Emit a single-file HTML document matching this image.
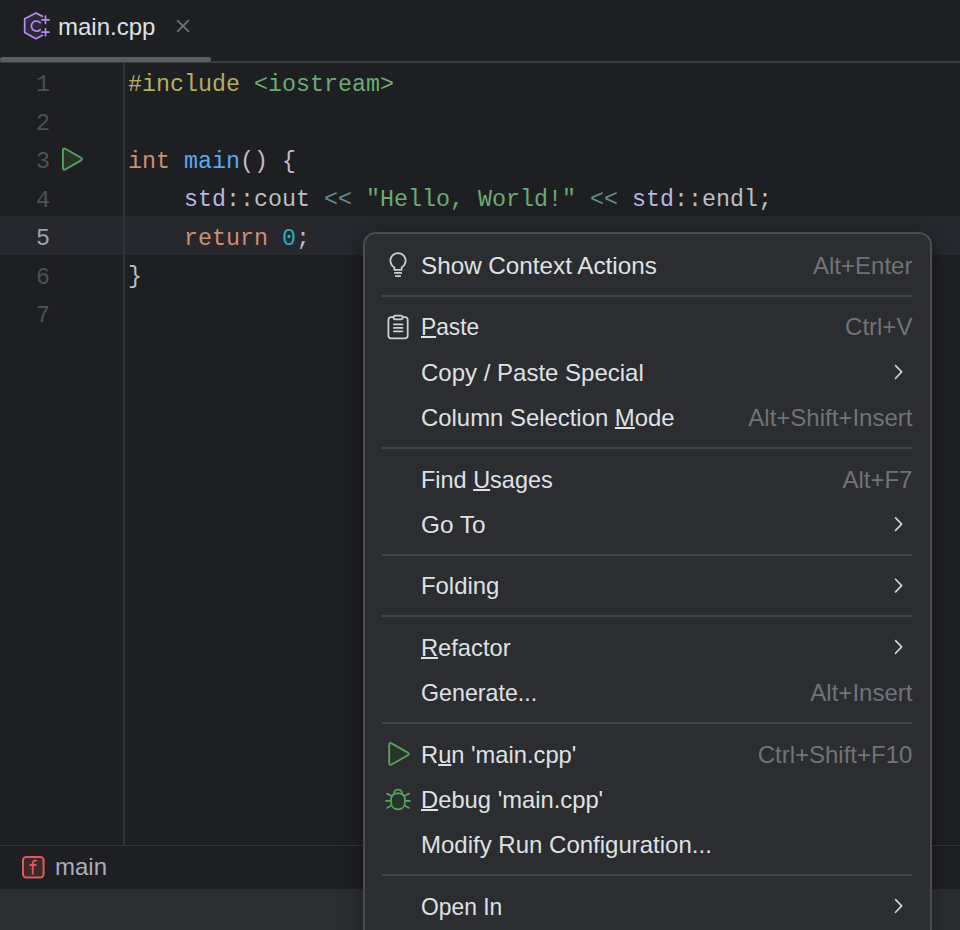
<!DOCTYPE html>
<html><head><meta charset="utf-8">
<style>
*{margin:0;padding:0;box-sizing:border-box}
html,body{width:960px;height:930px;overflow:hidden;background:#1E1F22}
body{position:relative;font-family:"Liberation Sans",sans-serif}
.abs{position:absolute}
#tabbar{left:0;top:0;width:960px;height:61px;background:#1E1F22}
#tabborder{left:0;top:61px;width:960px;height:1.5px;background:#393B40}
#tabul{left:0;top:57px;width:211px;height:5px;border-radius:3px;background:#5A5D63}
#tabtext{left:58px;top:12px;font-size:24px;line-height:30px;color:#DFE1E5;white-space:pre}
#tabclose{left:172px;top:16px}
#editor{left:0;top:62px;width:960px;height:783px;background:#1E1F22}
#curline{left:0;top:216px;width:960px;height:38.5px;background:#26282E}
#gutsep{left:123px;top:62px;width:2px;height:783px;background:#313438}
.ln{position:absolute;left:0;width:50px;padding-top:4px;text-align:right;font-family:"Liberation Mono",monospace;font-size:23.33px;line-height:38.5px;color:#4B5059}
.code{position:absolute;left:128px;padding-top:3.5px;font-family:"Liberation Mono",monospace;font-size:23.33px;line-height:38.5px;color:#BCBEC4;white-space:pre}
.kw{color:#CF8E6D}.fn{color:#56A8F5}.pp{color:#B3AE60}.str{color:#6AAB73}.num{color:#2AACB8}.ns{color:#B5B6E3}.op{color:#5F8C8A}
#crumbborder{left:0;top:844.5px;width:960px;height:1.3px;background:#313438}
#crumbs{left:0;top:845.5px;width:960px;height:43.5px;background:#1E1F22}
#status{left:0;top:889px;width:960px;height:41px;background:#2B2D30}
#crumbtext{left:55px;top:852px;font-size:24px;line-height:30px;color:#A8ADBD}
#menu{left:363px;top:232px;width:569px;height:720px;background:#2B2D30;border:2px solid #4A4C51;border-radius:13px;box-shadow:0 4px 24px rgba(0,0,0,0.35)}
.mi{position:absolute;left:0;width:569px;height:45.4px}
.mi .t{transform-origin:0 0;position:absolute;left:56.0px;top:0.7px;font-size:24px;line-height:45.4px;color:#DFE1E5;white-space:pre}
.mi .k{position:absolute;right:21.6px;top:0.7px;font-size:24px;line-height:45.4px;color:#6F737A;white-space:pre}
.mi .ch{position:absolute;right:28px;top:15px}
.mi .ic{position:absolute;left:22px;top:8px}
.sep{position:absolute;left:17px;width:530px;height:2px;background:#43454A}
u{text-decoration:underline;text-decoration-thickness:2px;text-underline-offset:1px}
</style></head><body>
<div id="tabbar" class="abs"></div>
<div id="editor" class="abs"></div>
<div id="curline" class="abs"></div>
<div id="gutsep" class="abs"></div>
<div id="tabborder" class="abs"></div>
<div id="tabul" class="abs"></div>
<div id="tabtext" class="abs">main.cpp</div>

<div class="ln" style="top:62px">1</div>
<div class="ln" style="top:100.5px">2</div>
<div class="ln" style="top:139px">3</div>
<div class="ln" style="top:177.5px">4</div>
<div class="ln" style="top:216px;color:#A1A3AB">5</div>
<div class="ln" style="top:254.5px">6</div>
<div class="ln" style="top:293px">7</div>

<div class="code" style="top:62px"><span class="pp">#include</span> <span class="str">&lt;iostream&gt;</span></div>
<div class="code" style="top:139px"><span class="kw">int</span> <span class="fn">main</span>() {</div>
<div class="code" style="top:177.5px">    <span class="ns">std</span>::cout <span class="op">&lt;&lt;</span> <span class="str">"Hello, World!"</span> <span class="op">&lt;&lt;</span> <span class="ns">std</span>::endl;</div>
<div class="code" style="top:216px">    <span class="kw">return</span> <span class="num">0</span>;</div>
<div class="code" style="top:254.5px">}</div>

<div id="crumbs" class="abs"></div>
<div id="crumbborder" class="abs"></div>
<div id="status" class="abs"></div>
<div id="crumbtext" class="abs">main</div>
<svg class="abs" style="left:0;top:0" width="960" height="930" viewBox="0 0 960 930" fill="none" stroke-linecap="round" stroke-linejoin="round">
<!-- c++ file icon -->
<g stroke="#B589F0" stroke-width="1.75">
<path d="M42.5 16.4 L36 13 L24.7 18.8 L24.7 32.5 L36 38.8 L42.5 35.3" fill="#2F2838"/>
<path d="M40.2 22.6 A5.1 5.1 0 1 0 40.2 29.6"/>
<path d="M45.5 16.2 V23.4 M41.9 19.8 H49.1 M45.5 28.5 V35.7 M41.9 32.1 H49.1"/>
</g>
<!-- tab close -->
<path d="M177.6 20.6 L188.4 31.4 M188.4 20.6 L177.6 31.4" stroke="#6F737A" stroke-width="1.75"/>
<!-- gutter run -->
<path d="M65.68 148.99 Q62.90 147.40 62.90 150.60 L62.90 167.60 Q62.90 170.80 65.68 169.21 L80.62 160.69 Q83.40 159.10 80.62 157.51 Z" fill="#253627" stroke="#5B9F61" stroke-width="1.9"/>
<!-- breadcrumb f -->
<rect x="23" y="856.9" width="20.6" height="20.6" rx="3.2" fill="#402728" stroke="#DB5C5C" stroke-width="2"/>
<path d="M36.6 860.8 C35 860.2 32.8 860.6 32.8 863 V874.6 M29.5 865 H36.6" stroke="#DB5C5C" stroke-width="1.9" stroke-linecap="butt"/>
</svg>

<div id="menu" class="abs">
<div class="mi" style="top:8.25px"><span class="t" style="transform:scaleX(1.0099)">Show Context Actions</span><span class="k">Alt+Enter</span></div>
<div class="sep" style="top:60.65px"></div>
<div class="mi" style="top:69.65px"><span class="t" style="transform:scaleX(0.9468)"><u>P</u>aste</span><span class="k">Ctrl+V</span></div>
<div class="mi" style="top:115.05px"><span class="t">Copy / Paste Special</span></div>
<div class="mi" style="top:160.45px"><span class="t" style="transform:scaleX(0.9953)">Column Selection <u>M</u>ode</span><span class="k">Alt+Shift+Insert</span></div>
<div class="sep" style="top:212.85px"></div>
<div class="mi" style="top:221.85px"><span class="t" style="transform:scaleX(0.9774)">Find <u>U</u>sages</span><span class="k">Alt+F7</span></div>
<div class="mi" style="top:267.25px"><span class="t" style="transform:scaleX(1.0143)">Go To</span></div>
<div class="sep" style="top:319.65px"></div>
<div class="mi" style="top:328.65px"><span class="t" style="transform:scaleX(0.9947)">Folding</span></div>
<div class="sep" style="top:381.05px"></div>
<div class="mi" style="top:390.05px"><span class="t" style="transform:scaleX(0.987)"><u>R</u>efactor</span></div>
<div class="mi" style="top:435.45px"><span class="t" style="transform:scaleX(0.9678)">Generate...</span><span class="k">Alt+Insert</span></div>
<div class="sep" style="top:487.85px"></div>
<div class="mi" style="top:496.85px"><span class="t" style="transform:scaleX(0.9877)">R<u>u</u>n 'main.cpp'</span><span class="k">Ctrl+Shift+F10</span></div>
<div class="mi" style="top:542.25px"><span class="t" style="transform:scaleX(0.9902)"><u>D</u>ebug 'main.cpp'</span></div>
<div class="mi" style="top:587.65px"><span class="t">Modify Run Configuration...</span></div>
<div class="sep" style="top:640.05px"></div>
<div class="mi" style="top:649.05px"><span class="t" style="transform:scaleX(0.9512)">Open In</span></div>

</div>
<svg class="abs" style="left:0;top:0;z-index:5" width="960" height="930" viewBox="0 0 960 930" fill="none" stroke-linecap="round" stroke-linejoin="round">
<!-- bulb -->
<g stroke="#CED0D6" stroke-width="1.75">
<path d="M394.4 269.8 L394.4 267.4 A7.6 7.6 0 1 1 401.6 267.4 L401.6 269.8 Z"/>
<path d="M394.8 272.9 H401.2 M395.8 276.1 H400.2"/>
</g>
<!-- clipboard -->
<g stroke="#CED0D6" stroke-width="1.75">
<path d="M393.2 317.2 H391 A2.6 2.6 0 0 0 388.4 319.8 V335.8 A2.6 2.6 0 0 0 391 338.4 H405.1 A2.6 2.6 0 0 0 407.7 335.8 V319.8 A2.6 2.6 0 0 0 405.1 317.2 H403"/>
<path d="M395.3 315.7 H400.9 Q402.6 315.7 402.6 317.5 Q402.6 319.3 400.9 319.3 H395.3 Q393.6 319.3 393.6 317.5 Q393.6 315.7 395.3 315.7 Z"/>
<path d="M393.9 324.4 H402.5 M393.9 327.9 H402.5 M393.9 331.3 H402.5"/>
</g>
<!-- run -->
<path d="M391.98 743.58 Q389.20 742.00 389.20 745.20 L389.20 762.60 Q389.20 765.80 391.98 764.22 L407.42 755.48 Q410.20 753.90 407.42 752.32 Z" fill="#253627" stroke="#5B9F61" stroke-width="1.9"/>
<!-- debug -->
<g stroke="#5B9F61" stroke-width="1.75">
<path d="M393.9 793.6 A4.1 4.1 0 0 1 402.1 793.6 Z" fill="#253627"/>
<path d="M391 800 C391 795.4 394 793.4 398 793.4 C402 793.4 405 795.4 405 800 V802 C405 806.6 402 809.4 398 809.4 C394 809.4 391 806.6 391 802 Z" fill="#253627"/>
<path d="M387.0 793.6 L391.3 795.8 M386.0 800.8 H390.6 M387.0 807.9 L391.3 805.6 M409.0 793.6 L404.7 795.8 M410.0 800.8 H405.4 M409.0 807.9 L404.7 805.6"/>
</g>
<!-- chevrons -->
<g stroke="#CED0D6" stroke-width="1.75">
<path d="M895.6 365.65 L901.6 371.95 L895.6 378.25"/>
<path d="M895.6 517.85 L901.6 524.15 L895.6 530.45"/>
<path d="M895.6 579.25 L901.6 585.55 L895.6 591.85"/>
<path d="M895.6 640.65 L901.6 646.95 L895.6 653.25"/>
<path d="M895.6 899.65 L901.6 905.95 L895.6 912.25"/>
</g>
</svg>
</body></html>
